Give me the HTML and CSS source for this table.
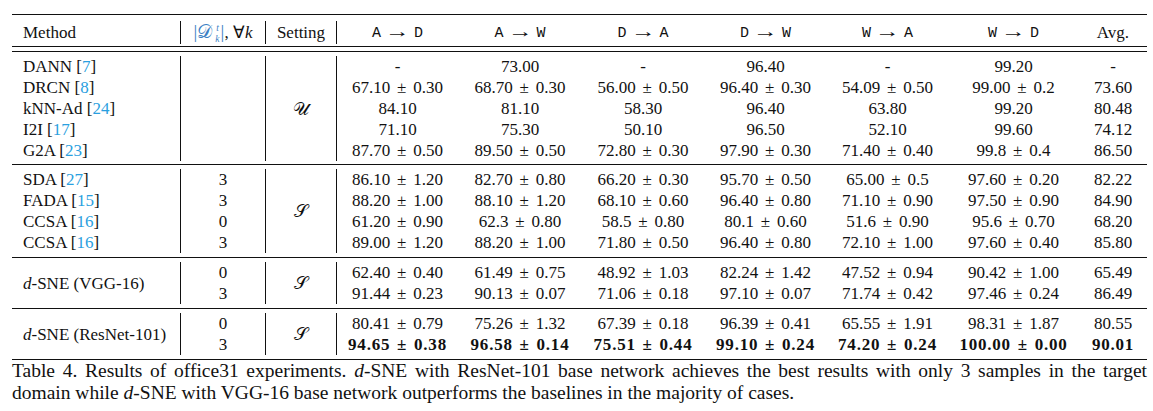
FILE: index.html
```html
<!DOCTYPE html>
<html>
<head>
<meta charset="utf-8">
<title>Table 4</title>
<link rel="stylesheet" href="styles.css">
</head>
<body>
<div class="page">
<table class="results">
<colgroup>
<col class="c-method"><col class="c-k"><col class="c-set"><col class="c-ad"><col class="c-aw"><col class="c-da"><col class="c-dw"><col class="c-wa"><col class="c-wd"><col class="c-avg">
</colgroup>
<tbody>
<tr class="rule"><td colspan="10"></td></tr>
<tr class="gap g6"><td colspan="10"></td></tr>
<tr class="row">
<td class="method vr">Method</td>
<td class="vr"><span class="dk">|<i class="cal">𝒟</i><span class="ss"><i>t</i><i>k</i></span>|</span>, ∀<i>k</i></td>
<td class="vr">Setting</td>
<td><span class="tt">A</span><span class="arr">→</span><span class="tt">D</span></td>
<td><span class="tt">A</span><span class="arr">→</span><span class="tt">W</span></td>
<td><span class="tt">D</span><span class="arr">→</span><span class="tt">A</span></td>
<td><span class="tt">D</span><span class="arr">→</span><span class="tt">W</span></td>
<td><span class="tt">W</span><span class="arr">→</span><span class="tt">A</span></td>
<td><span class="tt">W</span><span class="arr">→</span><span class="tt">D</span></td>
<td>Avg.</td>
</tr>
<tr class="gap g2"><td colspan="10"></td></tr>
<tr class="rule"><td colspan="10"></td></tr>
<tr class="gap g4"><td colspan="10"></td></tr>
<tr class="rule"><td colspan="10"></td></tr>
<tr class="gap g4"><td colspan="10"></td></tr>

<tr class="row">
<td class="method vr">DANN [<span class="cite">7</span>]</td>
<td class="vr" rowspan="5"></td>
<td class="vr" rowspan="5"><i class="cal big">𝒰</i></td>
<td>-</td><td>73.00</td><td>-</td><td>96.40</td><td>-</td><td>99.20</td><td>-</td>
</tr>
<tr class="row">
<td class="method vr">DRCN [<span class="cite">8</span>]</td>
<td>67.10<span class="pm">±</span>0.30</td><td>68.70<span class="pm">±</span>0.30</td><td>56.00<span class="pm">±</span>0.50</td><td>96.40<span class="pm">±</span>0.30</td><td>54.09<span class="pm">±</span>0.50</td><td>99.00<span class="pm">±</span>0.2</td><td>73.60</td>
</tr>
<tr class="row">
<td class="method vr">kNN-Ad [<span class="cite">24</span>]</td>
<td>84.10</td><td>81.10</td><td>58.30</td><td>96.40</td><td>63.80</td><td>99.20</td><td>80.48</td>
</tr>
<tr class="row">
<td class="method vr">I2I [<span class="cite">17</span>]</td>
<td>71.10</td><td>75.30</td><td>50.10</td><td>96.50</td><td>52.10</td><td>99.60</td><td>74.12</td>
</tr>
<tr class="row">
<td class="method vr">G2A [<span class="cite">23</span>]</td>
<td>87.70<span class="pm">±</span>0.50</td><td>89.50<span class="pm">±</span>0.50</td><td>72.80<span class="pm">±</span>0.30</td><td>97.90<span class="pm">±</span>0.30</td><td>71.40<span class="pm">±</span>0.40</td><td>99.8<span class="pm">±</span>0.4</td><td>86.50</td>
</tr>
<tr class="gap g3"><td colspan="10"></td></tr>
<tr class="rule"><td colspan="10"></td></tr>
<tr class="gap g4"><td colspan="10"></td></tr>

<tr class="row">
<td class="method vr">SDA [<span class="cite">27</span>]</td>
<td class="vr">3</td>
<td class="vr" rowspan="4"><i class="cal big">𝒮</i></td>
<td>86.10<span class="pm">±</span>1.20</td><td>82.70<span class="pm">±</span>0.80</td><td>66.20<span class="pm">±</span>0.30</td><td>95.70<span class="pm">±</span>0.50</td><td>65.00<span class="pm">±</span>0.5</td><td>97.60<span class="pm">±</span>0.20</td><td>82.22</td>
</tr>
<tr class="row">
<td class="method vr">FADA [<span class="cite">15</span>]</td>
<td class="vr">3</td>
<td>88.20<span class="pm">±</span>1.00</td><td>88.10<span class="pm">±</span>1.20</td><td>68.10<span class="pm">±</span>0.60</td><td>96.40<span class="pm">±</span>0.80</td><td>71.10<span class="pm">±</span>0.90</td><td>97.50<span class="pm">±</span>0.90</td><td>84.90</td>
</tr>
<tr class="row">
<td class="method vr">CCSA [<span class="cite">16</span>]</td>
<td class="vr">0</td>
<td>61.20<span class="pm">±</span>0.90</td><td>62.3<span class="pm">±</span>0.80</td><td>58.5<span class="pm">±</span>0.80</td><td>80.1<span class="pm">±</span>0.60</td><td>51.6<span class="pm">±</span>0.90</td><td>95.6<span class="pm">±</span>0.70</td><td>68.20</td>
</tr>
<tr class="row">
<td class="method vr">CCSA [<span class="cite">16</span>]</td>
<td class="vr">3</td>
<td>89.00<span class="pm">±</span>1.20</td><td>88.20<span class="pm">±</span>1.00</td><td>71.80<span class="pm">±</span>0.50</td><td>96.40<span class="pm">±</span>0.80</td><td>72.10<span class="pm">±</span>1.00</td><td>97.60<span class="pm">±</span>0.40</td><td>85.80</td>
</tr>
<tr class="gap g4"><td colspan="10"></td></tr>
<tr class="rule"><td colspan="10"></td></tr>
<tr class="gap g4"><td colspan="10"></td></tr>

<tr class="row">
<td class="method vr" rowspan="2"><i>d</i>-SNE (VGG-16)</td>
<td class="vr">0</td>
<td class="vr" rowspan="2"><i class="cal big">𝒮</i></td>
<td>62.40<span class="pm">±</span>0.40</td><td>61.49<span class="pm">±</span>0.75</td><td>48.92<span class="pm">±</span>1.03</td><td>82.24<span class="pm">±</span>1.42</td><td>47.52<span class="pm">±</span>0.94</td><td>90.42<span class="pm">±</span>1.00</td><td>65.49</td>
</tr>
<tr class="row">
<td class="vr">3</td>
<td>91.44<span class="pm">±</span>0.23</td><td>90.13<span class="pm">±</span>0.07</td><td>71.06<span class="pm">±</span>0.18</td><td>97.10<span class="pm">±</span>0.07</td><td>71.74<span class="pm">±</span>0.42</td><td>97.46<span class="pm">±</span>0.24</td><td>86.49</td>
</tr>
<tr class="gap g4"><td colspan="10"></td></tr>
<tr class="rule"><td colspan="10"></td></tr>
<tr class="gap g4"><td colspan="10"></td></tr>

<tr class="row">
<td class="method vr" rowspan="2"><i>d</i>-SNE (ResNet-101)</td>
<td class="vr">0</td>
<td class="vr" rowspan="2"><i class="cal big">𝒮</i></td>
<td>80.41<span class="pm">±</span>0.79</td><td>75.26<span class="pm">±</span>1.32</td><td>67.39<span class="pm">±</span>0.18</td><td>96.39<span class="pm">±</span>0.41</td><td>65.55<span class="pm">±</span>1.91</td><td>98.31<span class="pm">±</span>1.87</td><td>80.55</td>
</tr>
<tr class="row best">
<td class="vr">3</td>
<td><b>94.65<span class="pm">±</span>0.38</b></td><td><b>96.58<span class="pm">±</span>0.14</b></td><td><b>75.51<span class="pm">±</span>0.44</b></td><td><b>99.10<span class="pm">±</span>0.24</b></td><td><b>74.20<span class="pm">±</span>0.24</b></td><td><b>100.00<span class="pm">±</span>0.00</b></td><td><b>90.01</b></td>
</tr>
<tr class="gap g4"><td colspan="10"></td></tr>
<tr class="rule"><td colspan="10"></td></tr>
</tbody>
</table>
<p class="caption"><span class="line1">Table 4. Results of office31 experiments. <i>d</i>-SNE with ResNet-101 base network achieves the best results with only 3 samples in the target</span>domain while <i>d</i>-SNE with VGG-16 base network outperforms the baselines in the majority of cases.</p>
</div>
</body>
</html>
```

FILE: styles.css
```css
html, body {
  margin: 0;
  background: #fff;
}
body {
  font-family: "Liberation Serif", "Times New Roman", serif;
  color: #111;
}
.page {
  width: 1135px;
  padding: 14px 0 0 12px;
}
.results {
  width: 1135px;
  table-layout: fixed;
  border-collapse: separate;
  border-spacing: 0;
  font-family: "Liberation Serif", "Times New Roman", serif;
  font-size: 17px;
}
.c-method { width: 169px; }
.c-k { width: 85px; }
.c-set { width: 71px; }
.c-ad { width: 121px; }
.c-aw { width: 124px; }
.c-da { width: 122px; }
.c-dw { width: 123px; }
.c-wa { width: 121px; }
.c-wd { width: 131px; }
.c-avg { width: 68px; }

.results td {
  padding: 0;
  font-family: "Liberation Serif", "Times New Roman", serif;
  text-align: center;
  vertical-align: middle;
  white-space: nowrap;
}
.row td {
  height: 21px;
  line-height: 21px;
}
.results td.method {
  text-align: left;
  padding-left: 11px;
}
.results td.vr {
  border-right: 1px solid #111;
}
.rule td {
  height: 0;
  font-size: 0;
  line-height: 0;
  border-top: 1px solid #111;
}
.gap td {
  font-size: 0;
  line-height: 0;
}
.g2 td { height: 2px; }
.g3 td { height: 3px; }
.g4 td { height: 4px; }
.g6 td { height: 6px; }

.cite { color: #2a9fe0; }
.pm { margin: 0 0.4em; }
.best b { letter-spacing: 0.8px; }

.tt {
  font-family: "Liberation Mono", "Courier New", monospace;
  font-size: 15px;
}
.arr {
  display: inline-block;
  font-family: "Liberation Serif", serif;
  font-size: 17px;
  transform: scaleX(1.45);
  margin: 0 8px;
}

.cal {
  font-family: "DejaVu Serif", "DejaVu Sans", serif;
  font-style: normal;
  font-weight: normal;
}
.cal.big {
  font-size: 18px;
}
.dk {
  color: #3b7fc4;
  font-size: 19px;
}
.ss {
  display: inline-flex;
  flex-direction: column;
  vertical-align: middle;
  font-size: 9.5px;
  line-height: 11px;
  margin: -1px 1px -1px 3px;
}

.caption {
  margin: 0;
  width: 1135px;
  font-size: 19.5px;
  line-height: 21.7px;
}
.line1 {
  display: block;
  text-align: justify;
  text-align-last: justify;
}
```
